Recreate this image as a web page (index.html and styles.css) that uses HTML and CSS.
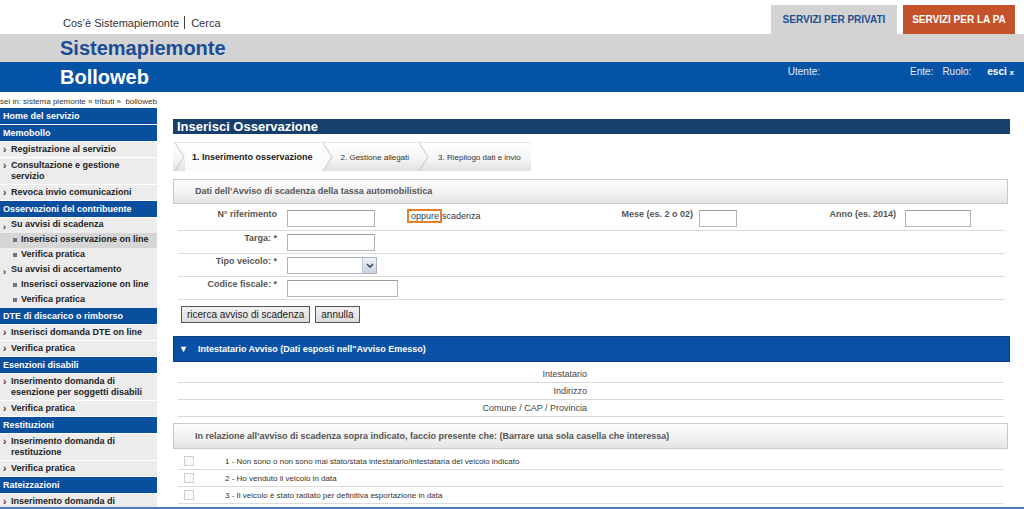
FILE: index.html
```html
<!DOCTYPE html>
<html lang="it">
<head>
<meta charset="utf-8">
<title>Bolloweb - Inserisci Osservazione</title>
<link rel="stylesheet" href="styles.css">
</head>
<body>
<header class="hdr">
  <div class="hdr-top">
    <div class="toplinks"><span>Cos’è Sistemapiemonte</span><span class="sep"></span><span>Cerca</span></div>
    <div class="tabs">
      <div class="tab tab-priv">SERVIZI PER PRIVATI</div>
      <div class="tab tab-pa">SERVIZI PER LA PA</div>
    </div>
  </div>
  <div class="hdr-gray"><span class="brand">Sistemapiemonte</span></div>
  <div class="hdr-blue">
    <span class="app">Bolloweb</span>
    <div class="user">
      <span class="u-utente">Utente:</span>
      <span class="u-ente">Ente:</span>
      <span class="u-ruolo">Ruolo:</span>
      <span class="u-esci">esci <small>x</small></span>
    </div>
  </div>
</header>

<div class="crumb">sei in: sistema piemonte » tributi » &nbsp;bolloweb</div>

<div class="layout">
  <nav class="side">
    <div class="sh">Home del servizio</div>
    <div class="sh">Memobollo</div>
    <div class="si">Registrazione al servizio</div>
    <div class="si">Consultazione e gestione<br>servizio</div>
    <div class="si">Revoca invio comunicazioni</div>
    <div class="sh">Osservazioni del contribuente</div>
    <div class="ss">Su avvisi di scadenza</div>
    <div class="sb on">Inserisci osservazione on line</div>
    <div class="sb">Verifica pratica</div>
    <div class="ss">Su avvisi di accertamento</div>
    <div class="sb">Inserisci osservazione on line</div>
    <div class="sb">Verifica pratica</div>
    <div class="sh">DTE di discarico o rimborso</div>
    <div class="si">Inserisci domanda DTE on line</div>
    <div class="si">Verifica pratica</div>
    <div class="sh">Esenzioni disabili</div>
    <div class="si">Inserimento domanda di<br>esenzione per soggetti disabili</div>
    <div class="si">Verifica pratica</div>
    <div class="sh">Restituzioni</div>
    <div class="si">Inserimento domanda di<br>restituzione</div>
    <div class="si">Verifica pratica</div>
    <div class="sh">Rateizzazioni</div>
    <div class="si">Inserimento domanda di</div>
  </nav>

  <main class="content">
    <h1 class="title">Inserisci Osservazione</h1>

    <div class="steps">
      <svg class="chev" width="12" height="28" viewBox="0 0 12 28"><polyline points="2,0 11,14 2,28" fill="none" stroke="#c4c4c4" stroke-width="1"/></svg>
      <span class="step active">1. Inserimento osservazione</span>
      <svg class="chev" width="12" height="28" viewBox="0 0 12 28"><polygon points="0,0 2,0 11,14 2,28 0,28" fill="#fafafa"/><polyline points="2,0 11,14 2,28" fill="none" stroke="#c4c4c4" stroke-width="1"/></svg>
      <span class="step s2">2. Gestione allegati</span>
      <svg class="chev" width="12" height="28" viewBox="0 0 12 28"><polyline points="2,0 11,14 2,28" fill="none" stroke="#c4c4c4" stroke-width="1"/></svg>
      <span class="step s3">3. Riepilogo dati e invio</span>
    </div>

    <div class="box">Dati dell’Avviso di scadenza della tassa automobilistica</div>

    <div class="form">
      <div class="frow frow1">
        <label class="lbl">N° riferimento</label>
        <div class="cell"><span class="inp w88"></span></div>
        <div class="cell oppure-cell"><span class="oppure">oppure</span>scadenza</div>
        <label class="lbl lbl-mese">Mese (es. 2 o 02)</label>
        <div class="cell"><span class="inp w38"></span></div>
        <label class="lbl lbl-anno">Anno (es. 2014)</label>
        <div class="cell"><span class="inp w66"></span></div>
      </div>
      <div class="frow">
        <label class="lbl">Targa: *</label>
        <div class="cell"><span class="inp w88"></span></div>
      </div>
      <div class="frow">
        <label class="lbl">Tipo veicolo: *</label>
        <div class="cell">
          <span class="sel"><span class="sel-btn"><svg width="8" height="6" viewBox="0 0 8 6"><polyline points="1,1 4,4 7,1" fill="none" stroke="#34495e" stroke-width="1.6"/></svg></span></span>
        </div>
      </div>
      <div class="frow">
        <label class="lbl">Codice fiscale: *</label>
        <div class="cell"><span class="inp w111"></span></div>
      </div>
      <div class="btns">
        <button class="btn" type="button">ricerca avviso di scadenza</button>
        <button class="btn" type="button">annulla</button>
      </div>
    </div>

    <div class="bluebar"><span class="tri">▼</span>Intestatario Avviso (Dati esposti nell"Avviso Emesso)</div>

    <div class="info">
      <div class="irow"><span class="ilbl">Intestatario</span><span class="ival"></span></div>
      <div class="irow"><span class="ilbl">Indirizzo</span><span class="ival"></span></div>
      <div class="irow"><span class="ilbl">Comune / CAP / Provincia</span><span class="ival"></span></div>
    </div>

    <div class="box box2">In relazione all’avviso di scadenza sopra indicato, faccio presente che: (Barrare una sola casella che interessa)</div>

    <div class="checks">
      <div class="crow"><span class="cb"></span><span>1 - Non sono o non sono mai stato/stata intestatario/intestataria del veicolo indicato</span></div>
      <div class="crow"><span class="cb"></span><span>2 - Ho venduto il veicolo in data</span></div>
      <div class="crow"><span class="cb"></span><span>3 - Il veicolo è stato radiato per definitiva esportazione in data</span></div>
    </div>
  </main>
</div>
<div class="winedge"></div>
</body>
</html>
```

FILE: styles.css
```css
* { box-sizing: border-box; }
html, body { margin: 0; padding: 0; }
body {
  font-family: "Liberation Sans", Arial, Helvetica, sans-serif;
  color: #333;
  background: #fff;
  overflow: hidden;
}

/* ---------- header ---------- */
.hdr-top {
  height: 34px;
  display: flex;
  justify-content: space-between;
  align-items: flex-end;
}
.toplinks {
  padding-left: 63px;
  font-size: 11px;
  color: #333;
  display: flex;
  align-items: center;
  height: 34px;
  padding-top: 11px;
}
.toplinks .sep {
  display: inline-block;
  width: 1px;
  height: 13px;
  background: #444;
  margin: 0 6px 0 5px;
}
.tabs { display: flex; gap: 6px; padding-right: 9px; }
.tab {
  height: 29px;
  display: flex;
  align-items: center;
  justify-content: center;
  font-size: 10px;
  font-weight: bold;
}
.tab-priv { width: 126px; background: #d3d3d3; color: #1f4f8f; }
.tab-pa { width: 112px; background: #c4532b; color: #fff; }

.hdr-gray {
  height: 28px;
  background: #d3d3d3;
  padding-left: 60px;
}
.brand {
  font-size: 20px;
  font-weight: bold;
  line-height: 28px;
  color: #1b4d96;
}
.hdr-blue {
  height: 30px;
  background: #0553a6;
  padding-left: 60px;
  display: flex;
  justify-content: space-between;
  align-items: flex-start;
}
.app {
  font-size: 20px;
  font-weight: bold;
  line-height: 30px;
  color: #fff;
}
.user {
  display: flex;
  font-size: 10px;
  color: #e4ebf5;
  padding-top: 4px;
  padding-right: 10px;
}
.u-utente { margin-right: 90px; }
.u-ente { margin-right: 9px; }
.u-ruolo { margin-right: 16px; }
.u-esci { font-weight: bold; color: #fff; }
.u-esci small { font-size: 8px; }

/* ---------- breadcrumb ---------- */
.crumb {
  height: 16px;
  padding-top: 3px;
  font-size: 8px;
  line-height: 13px;
  color: #333;
}

/* ---------- layout ---------- */
.layout {
  display: flex;
  align-items: flex-start;
  gap: 16px;
}

/* ---------- sidebar ---------- */
.side {
  width: 157px;
  flex: none;
  background: #ececec;
  font-size: 9px;
  font-weight: bold;
  color: #222;
}
.sh {
  height: 16px;
  line-height: 16px;
  background: #0a4e9e;
  color: #fff;
  padding-left: 3px;
  border-bottom: 1px solid #fff;
  box-sizing: content-box;
}
.si {
  position: relative;
  line-height: 11px;
  padding: 2px 0 2px 11px;
  border-bottom: 1px solid #fff;
}
.si::before {
  content: "›";
  position: absolute;
  left: 3px;
  top: 2px;
  font-size: 10px;
  font-weight: bold;
  color: #333;
}
.ss {
  position: relative;
  line-height: 11px;
  padding: 1px 0 2px 11px;
  border-bottom: 1px solid #ececec;
}
.ss::before {
  content: "›";
  position: absolute;
  left: 3px;
  top: 4px;
  font-size: 9px;
  color: #333;
}
.sb {
  position: relative;
  line-height: 11px;
  padding: 1px 0 2px 21px;
  border-bottom: 1px solid #ececec;
}
.sb::before {
  content: "";
  position: absolute;
  left: 13px;
  top: 5px;
  width: 4px;
  height: 4px;
  background: #6a7789;
}
.sb.on { background: #d6d6d6; border-bottom-color: #d6d6d6; }

/* ---------- content ---------- */
.content {
  width: 837px;
  flex: none;
  padding-top: 11px;
}
.title {
  margin: 0;
  height: 15px;
  line-height: 15px;
  background: #173f6e;
  color: #fff;
  font-size: 13px;
  font-weight: bold;
  padding-left: 4px;
}

.steps {
  margin-top: 8px;
  display: flex;
  width: fit-content;
  height: 29px;
  align-items: stretch;
  background: linear-gradient(#ffffff, #f6f6f6 55%, #e0e0e0);
  border-top: 1px solid #e6e6e6;
}
.chev { display: block; flex: none; height: 28px; }
.step {
  display: flex;
  align-items: center;
  font-size: 8px;
  color: #333;
}
.step.active {
  font-size: 9px;
  font-weight: bold;
  color: #222;
  background: linear-gradient(#ffffff, #fafafa);
  padding: 0 8px 0 7px;
}
.s2 { padding: 0 8px 0 8px; }
.s3 { padding: 0 10px 0 9px; }

.box {
  margin-top: 8px;
  width: 835px;
  height: 25px;
  border: 1px solid #c9c9c9;
  background: linear-gradient(#fdfdfd, #f1f1f1 60%, #e4e4e4);
  font-size: 9px;
  font-weight: bold;
  color: #555;
  line-height: 23px;
  padding-left: 21px;
}

/* ---------- form ---------- */
.form { padding: 0 5px; }
.frow {
  display: grid;
  grid-template-columns: 109px 120px 192px 100px 101px 105px 1fr;
  align-items: start;
  height: 23px;
  padding: 3px 0 2px;
  border-bottom: 1px solid #dcdcdc;
}
.frow1 { height: 27px; padding: 6px 0 3px; }
.lbl {
  font-size: 9px;
  font-weight: bold;
  color: #555;
  text-align: right;
  padding-right: 10px;
  line-height: 11px;
  margin-top: -1px;
}
.lbl-mese { padding-right: 6px; }
.lbl-anno { padding-right: 9px; }
.cell { display: flex; align-items: center; font-size: 9px; }
.inp {
  display: block;
  height: 17px;
  border: 1px solid #b5b5b5;
  border-top-color: #9c9c9c;
  background: #fff;
}
.w88 { width: 88px; }
.w38 { width: 38px; }
.w66 { width: 66px; }
.w111 { width: 111px; }
.oppure-cell { color: #333; margin-top: -1px; }
.oppure {
  border: 2px solid #e8802a;
  padding: 0 1px 0 2px;
  line-height: 10px;
  color: #2a3e63;
}
.sel {
  display: flex;
  justify-content: flex-end;
  width: 90px;
  height: 17px;
  border: 1px solid #a9b3bf;
  background: #fff;
}
.sel-btn {
  width: 14px;
  height: 15px;
  background: linear-gradient(#eef2f7, #c9d3df);
  border-left: 1px solid #c0c8d2;
  display: flex;
  align-items: center;
  justify-content: center;
}
.btns {
  display: flex;
  gap: 5px;
  padding: 6px 0 0 3px;
}
.btn {
  font-family: inherit;
  font-size: 10px;
  color: #222;
  height: 17px;
  padding: 0 5px;
  margin: 0;
  background: linear-gradient(#f2f2f2, #dcdcdc);
  border: 1px solid #555;
  border-radius: 0;
}

/* ---------- blue bar ---------- */
.bluebar {
  margin-top: 13px;
  height: 26px;
  background: #0a51a6;
  border: 1px solid #0b3f80;
  color: #fff;
  font-size: 9px;
  font-weight: bold;
  line-height: 24px;
  padding-left: 5px;
  display: flex;
  align-items: center;
}
.tri { font-size: 9px; margin-right: 10px; }

.info { padding: 4px 6px 0 5px; }
.irow {
  display: grid;
  grid-template-columns: 413px 1fr;
  height: 17px;
  line-height: 16px;
  border-bottom: 1px solid #d9d9d9;
  font-size: 9px;
  color: #444;
}
.ilbl { text-align: right; padding-right: 4px; }

.box2 { margin-top: 6px; height: 26px; line-height: 24px; }

.checks { padding: 4px 6px 0 5px; }
.crow {
  display: flex;
  align-items: center;
  height: 17px;
  border-bottom: 1px solid #dcdcdc;
  font-size: 8px;
  color: #333;
}
.cb {
  width: 10px;
  height: 10px;
  border: 1px solid #cfcfcf;
  background: #fafafa;
  margin-left: 6px;
  margin-right: 31px;
}

.winedge {
  position: fixed;
  left: 0;
  right: 0;
  bottom: 0;
  height: 2px;
  background: #4a7cbf;
}
```
